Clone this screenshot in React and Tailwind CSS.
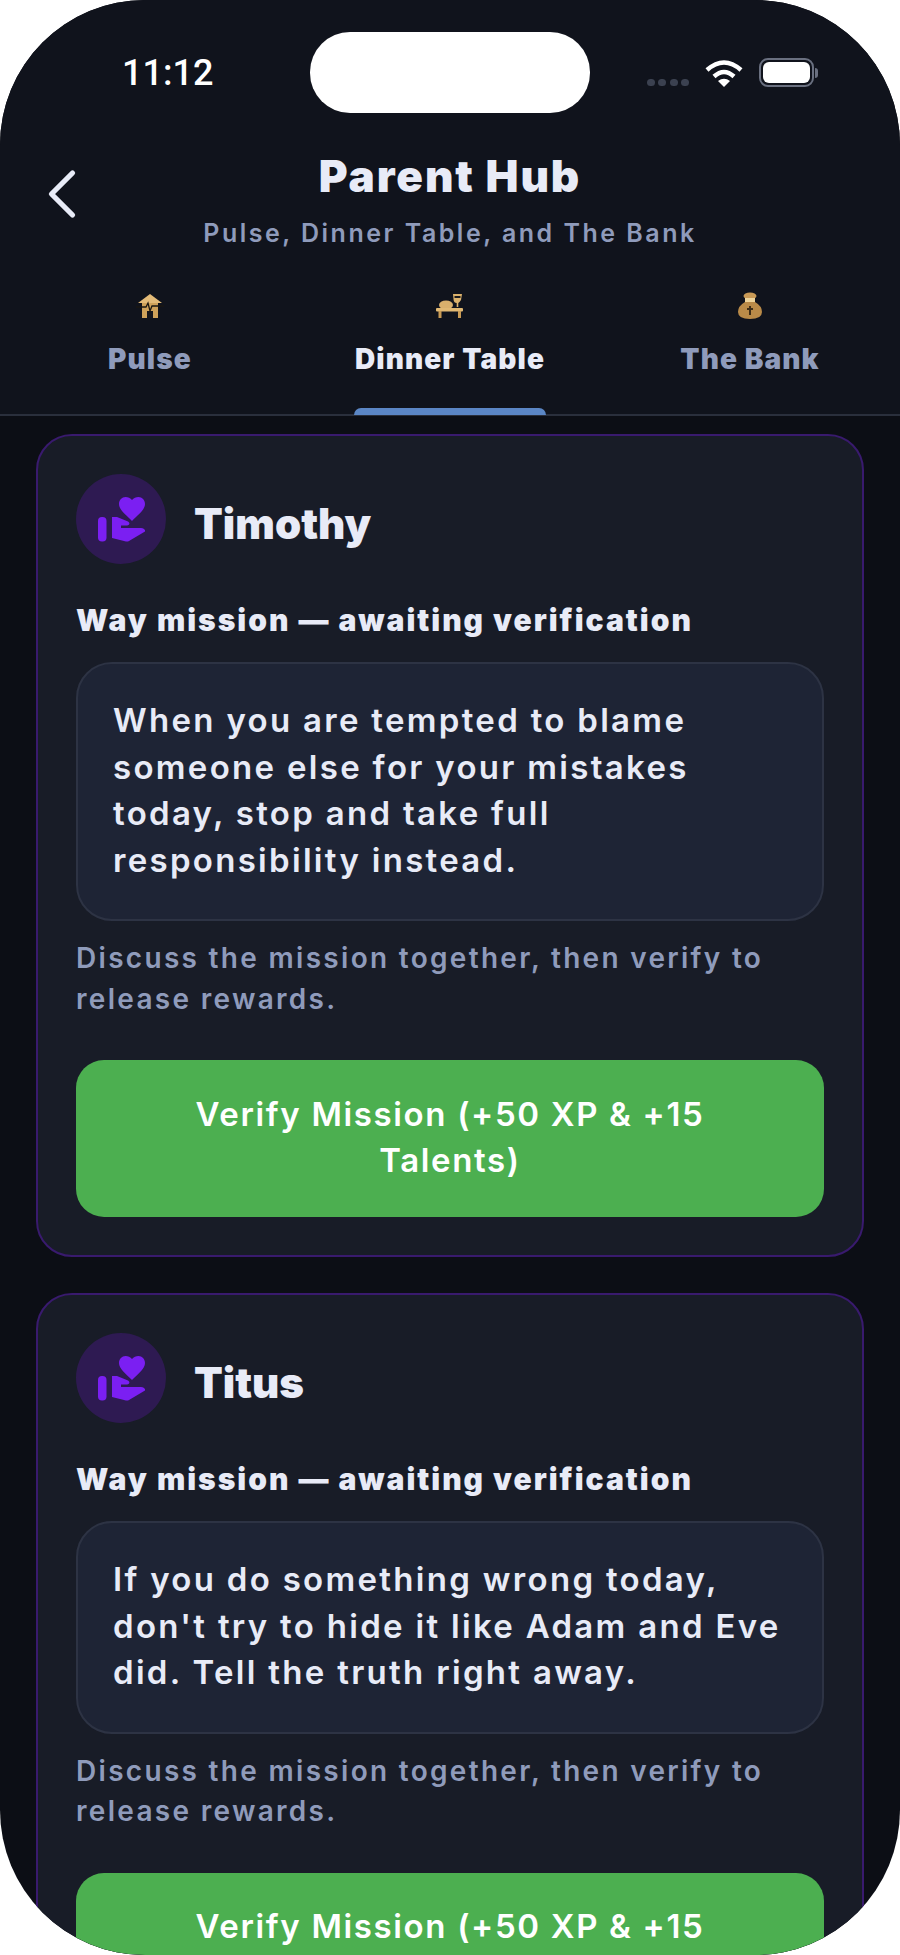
import { ChevronLeft } from 'lucide-react'

const heading = { fontFamily: 'Inter, "Noto Sans", sans-serif' }
const body = { fontFamily: 'Inter, sans-serif' }

function HouseIcon() {
  return (
    <svg width="30" height="26" viewBox="0 0 30 26">
      <path d="M7 9 H23 V25 H7 Z" fill="#cfa25a" />
      <path d="M3 10 L15 1 L27 10 Z" fill="#e3bb78" />
      <rect x="12" y="18" width="6" height="7" fill="#15161c" />
      <path d="M1 14 H11 L13 10 L15 18 L17 13 H29" fill="none" stroke="#1a1712" strokeWidth="1.3" />
    </svg>
  )
}

function TableIcon() {
  return (
    <svg width="30" height="26" viewBox="0 0 30 26">
      <ellipse cx="11" cy="12" rx="7" ry="4.5" fill="#d9b06c" />
      <path d="M18 1 H27 L26 7 Q24 10 23.3 10 V14 H21.7 V10 Q19 10 18.6 7 Z" fill="#dcb26c" />
      <rect x="19.5" y="3" width="6" height="2" fill="#1b1a1d" />
      <rect x="1" y="15" width="27" height="3.5" rx="1" fill="#e0b873" />
      <rect x="3.5" y="18" width="3" height="7" fill="#c99b55" />
      <rect x="23" y="18" width="3" height="7" fill="#c99b55" />
    </svg>
  )
}

function BagIcon() {
  return (
    <svg width="26" height="28" viewBox="0 0 26 28">
      <ellipse cx="13" cy="4" rx="6.5" ry="3.5" fill="#c99a56" />
      <rect x="8" y="6" width="10" height="4" fill="#edd39a" />
      <path d="M8 10 H18 Q25 14 25 20 Q25 27 13 27 Q1 27 1 20 Q1 14 8 10 Z" fill="#b98a48" />
      <path d="M13 14 V23 M10 17 H16" stroke="#3d2c16" strokeWidth="2" />
    </svg>
  )
}

function HandHeart() {
  return (
    <svg width="47" height="45" viewBox="0 0 47 45" fill="#7b1ff2">
      <rect x="0" y="20" width="8.5" height="24.5" rx="4" />
      <path d="M34 24 C27 17 21 12.5 21 7 C21 3 24 0 27.5 0 C30 0 32.5 1.2 34 3 C35.5 1.2 38 0 40.5 0 C44 0 47 3 47 7 C47 12.5 41 17 34 24 Z" />
      <path d="M14 20 H19 L30 24.5 C32 25.5 32 28.5 29 28.5 H23 V31 H43 C46 31 47.5 33 47 34.5 L31 44 Q29.5 44.8 28 44.4 L14 41 Z" />
    </svg>
  )
}

function MissionCard({ name, mission }) {
  return (
    <div className="flex flex-col rounded-[36px] border-2 border-[#391a6e] bg-[#181c27] px-[38px] pt-[38px] pb-[38px]">
      <div className="flex items-center gap-[28px]">
        <div className="flex h-[90px] w-[90px] items-center justify-center rounded-full bg-[#2e1a52]">
          <HandHeart />
        </div>
        <span className="pt-[8px] text-[42px] font-black text-[#e8ebf7]" style={heading}>{name}</span>
      </div>
      <p className="mt-[36px] text-[30px] leading-[40px] font-black tracking-[2px] text-[#e8ebf7]" style={heading}>
        Way mission — awaiting verification
      </p>
      <div className="mt-[22px] rounded-[36px] border-2 border-[#2d3344] bg-[#1e2435] pt-[33px] pr-[20px] pb-[36px] pl-[35px]">
        <p className="text-[33px] leading-[46.5px] font-semibold tracking-[2.3px] text-[#e8ebf7]" style={body}>
          {mission}
        </p>
      </div>
      <p className="mt-[17px] text-[28px] leading-[40.5px] font-semibold tracking-[2.3px] text-[#8f9bbb]" style={body}>
        Discuss the mission together, then verify to release rewards.
      </p>
      <button className="mt-[41px] h-[157px] shrink-0 rounded-[28px] bg-[#4caf50] px-[70px] pb-[4px] text-center text-[33px] leading-[46px] font-semibold tracking-[1.65px] text-white" style={body}>
        Verify Mission (+50 XP &amp; +15 Talents)
      </button>
    </div>
  )
}

function Tab({ icon, label, active }) {
  return (
    <div className="relative flex flex-1 flex-col items-center">
      <div className="flex h-[30px] items-center justify-center">{icon}</div>
      <span className={`mt-[20px] mb-[37px] text-[28px] leading-[36px] font-black tracking-[1.1px] ${active ? 'text-[#e8ebf7]' : 'text-[#8f9bbb]'}`} style={heading}>
        {label}
      </span>
      {active && <div className="absolute bottom-[-1px] h-[7px] w-[192px] rounded-t-[8px] bg-[#5b86c5]" />}
    </div>
  )
}

export default function App() {
  return (
    <div className="h-[1955px] w-[900px] overflow-hidden bg-white">
      <div className="flex h-full w-full flex-col overflow-hidden rounded-[145px] bg-[#0c0e15]">
        <div className="bg-[#10131c]">
          <div className="relative flex h-[145px] items-start justify-between pt-[52px] pr-[82px] pl-[122px]">
            <span className="text-[36px] leading-[42px] font-medium text-white" style={{ fontFamily: 'Roboto, sans-serif' }}>11:12</span>
            <div className="absolute top-[32px] left-[310px] h-[81px] w-[280px] rounded-[40px] bg-white" />
            <div className="flex items-center gap-[16px] pt-[6px]">
              <div className="mt-[20px] flex gap-[3.5px]">
                <span className="h-[7px] w-[8px] rounded-full bg-[#3b4150]" />
                <span className="h-[7px] w-[8px] rounded-full bg-[#3b4150]" />
                <span className="h-[7px] w-[8px] rounded-full bg-[#3b4150]" />
                <span className="h-[7px] w-[8px] rounded-full bg-[#3b4150]" />
              </div>
              <svg width="38" height="28" viewBox="0 0 38 28" fill="none" stroke="#fff" strokeWidth="4.5">
                <path d="M2 11 Q19 -4 36 11" />
                <path d="M9 17.5 Q19 8.5 29 17.5" />
                <path d="M19 28 L13 22 Q19 17.5 25 22 Z" fill="#fff" stroke="none" />
              </svg>
              <div className="flex items-center gap-[1px]">
                <div className="h-[29px] w-[55px] rounded-[9px] border-[2px] border-[#6a7080] p-[2px]">
                  <div className="h-full w-full rounded-[6px] bg-white" />
                </div>
                <div className="h-[10px] w-[3px] rounded-r-full bg-[#6a7080]" />
              </div>
            </div>
          </div>
          <div className="relative flex flex-col items-center pt-[3px]">
            <ChevronLeft className="absolute top-[7px] left-[20px] text-[#e8ebf7]" size={84} strokeWidth={1.5} />
            <h1 className="text-[44px] leading-[56px] font-black tracking-[1.9px] text-[#e8ebf7]" style={heading}>Parent Hub</h1>
            <p className="mt-[13px] text-[25px] leading-[32px] font-semibold tracking-[2.5px] text-[#8f9bbb]" style={body}>
              Pulse, Dinner Table, and The Bank
            </p>
          </div>
          <div className="mt-[42px] flex border-b-2 border-[#2a2f3c]">
            <Tab icon={<HouseIcon />} label="Pulse" />
            <Tab icon={<TableIcon />} label="Dinner Table" active />
            <Tab icon={<BagIcon />} label="The Bank" />
          </div>
        </div>
        <div className="flex flex-col gap-[36px] px-[36px] pt-[18px]">
          <MissionCard
            name="Timothy"
            mission="When you are tempted to blame someone else for your mistakes today, stop and take full responsibility instead."
          />
          <MissionCard
            name="Titus"
            mission="If you do something wrong today, don't try to hide it like Adam and Eve did. Tell the truth right away."
          />
        </div>
      </div>
    </div>
  )
}
